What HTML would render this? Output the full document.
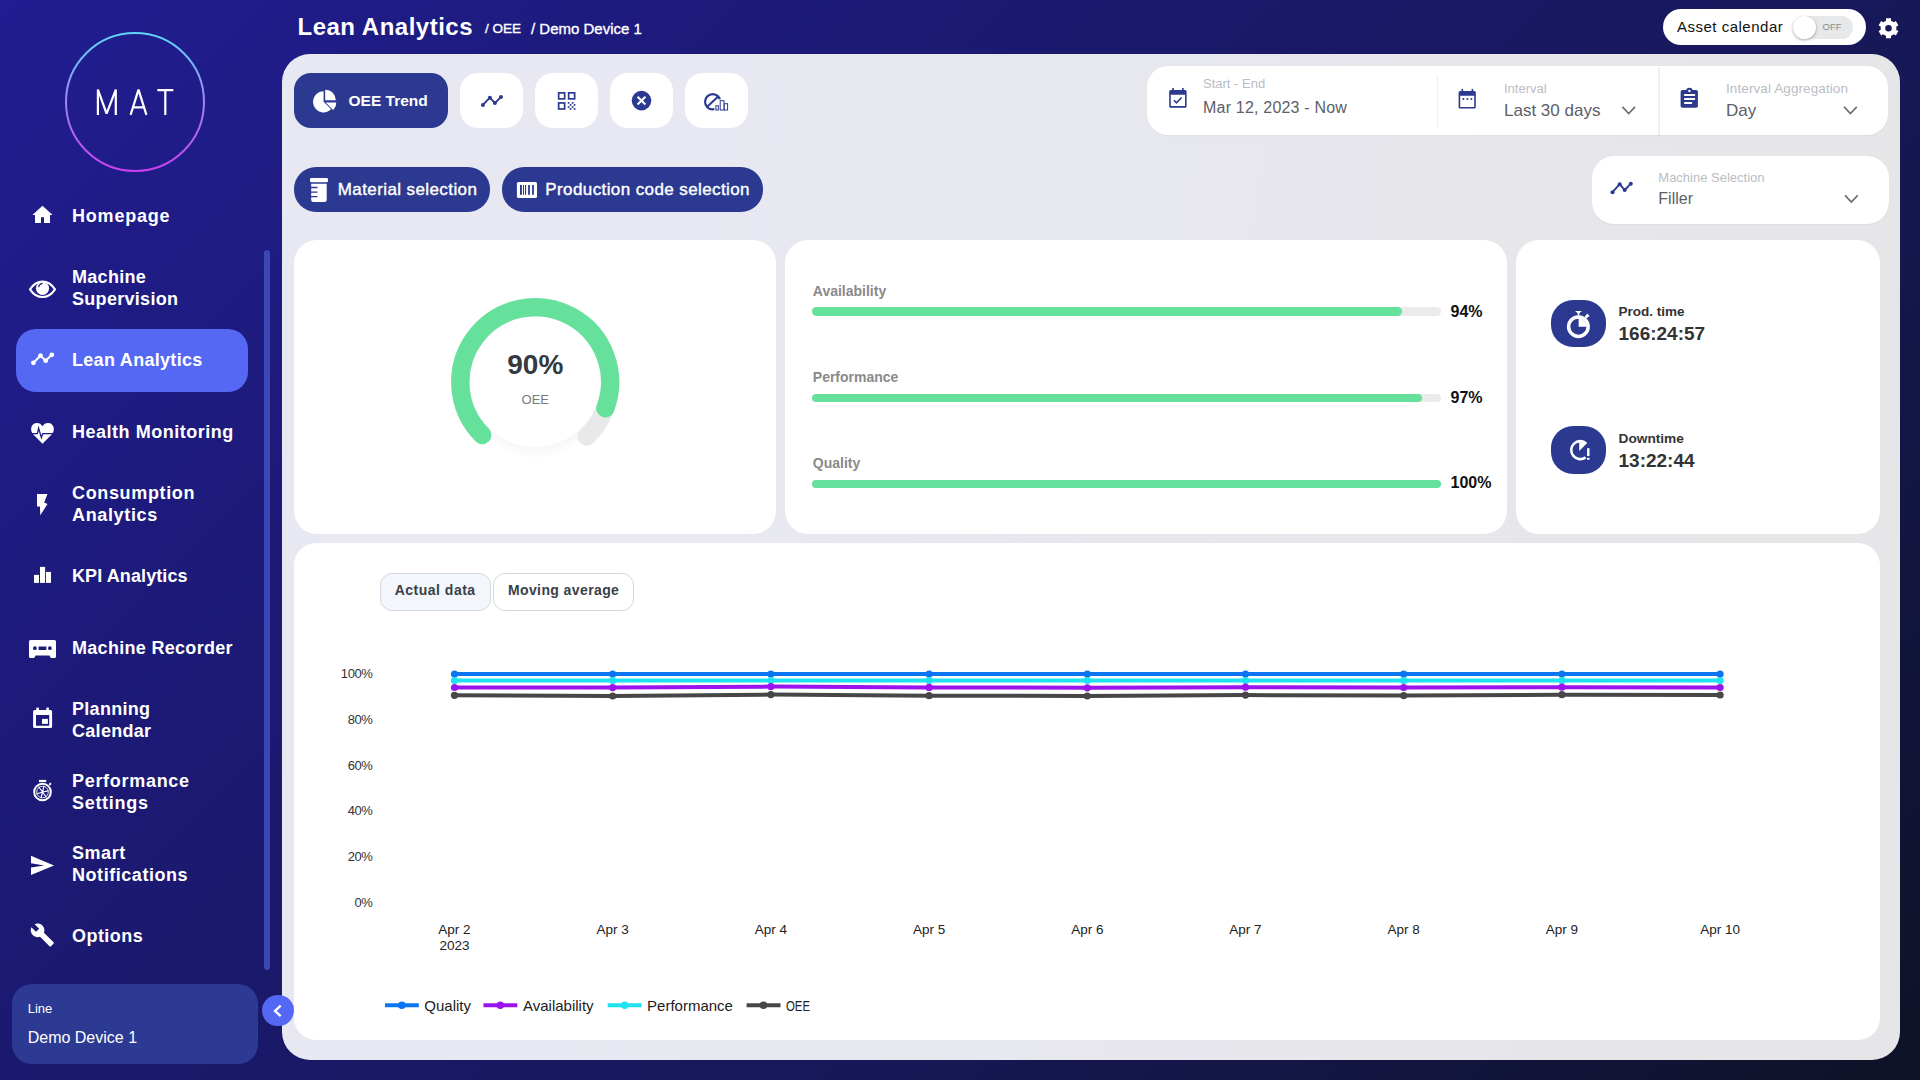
<!DOCTYPE html>
<html><head><meta charset="utf-8">
<style>
*{box-sizing:border-box;margin:0;padding:0}
html,body{width:1920px;height:1080px;overflow:hidden}
body{font-family:"Liberation Sans",sans-serif;position:relative;
background:linear-gradient(135deg,#211d92 0%,#1b196f 36%,#171858 64%,#0e1226 100%);}
.abs{position:absolute}
.t{position:absolute;white-space:nowrap;line-height:1}
svg{position:absolute;left:0;top:0;overflow:visible}
</style></head><body>

<svg width="1920" height="1080" style="z-index:1"><defs><linearGradient id="lg" x1="0" y1="0" x2="0" y2="1"><stop offset="0" stop-color="#5ed6f8"/><stop offset="0.5" stop-color="#9d85f4"/><stop offset="1" stop-color="#cc3ff0"/></linearGradient></defs><circle cx="135" cy="102" r="69" fill="none" stroke="url(#lg)" stroke-width="2"/><g fill="none" stroke="#fff" stroke-width="2.2" stroke-linejoin="bevel"><path d="M97.9 114.9 V89.6 L106.6 113.6 L115.8 89.6 V114.9"/><path d="M130.6 114.9 L138.5 89.6 L146.4 114.9 M133.4 107.3 H143.6"/><path d="M157.3 90.1 H173.3 M165.3 90.1 V115"/></g></svg>
<div class="abs" style="left:16px;top:329px;width:232px;height:63px;background:#5468f3;border-radius:20px;"></div>
<div class="abs" style="left:264px;top:250px;width:6px;height:720px;background:#3a47b4;border-radius:3px;"></div>
<div class="abs" style="left:72px;top:205.06px;color:#fff;font-weight:700;font-size:18px;letter-spacing:0.8px;line-height:22px;white-space:nowrap">Homepage</div>
<div class="abs" style="left:72px;top:265.76px;color:#fff;font-weight:700;font-size:18px;letter-spacing:0.3px;line-height:22px;white-space:nowrap">Machine<br>Supervision</div>
<div class="abs" style="left:72px;top:349.16px;color:#fff;font-weight:700;font-size:18px;letter-spacing:0.3px;line-height:22px;white-space:nowrap">Lean Analytics</div>
<div class="abs" style="left:72px;top:421.36px;color:#fff;font-weight:700;font-size:18px;letter-spacing:0.52px;line-height:22px;white-space:nowrap">Health Monitoring</div>
<div class="abs" style="left:72px;top:482.46px;color:#fff;font-weight:700;font-size:18px;letter-spacing:0.65px;line-height:22px;white-space:nowrap">Consumption<br>Analytics</div>
<div class="abs" style="left:72px;top:564.96px;color:#fff;font-weight:700;font-size:18px;letter-spacing:0.1px;line-height:22px;white-space:nowrap">KPI Analytics</div>
<div class="abs" style="left:72px;top:636.66px;color:#fff;font-weight:700;font-size:18px;letter-spacing:0.3px;line-height:22px;white-space:nowrap">Machine Recorder</div>
<div class="abs" style="left:72px;top:698.26px;color:#fff;font-weight:700;font-size:18px;letter-spacing:0.3px;line-height:22px;white-space:nowrap">Planning<br>Calendar</div>
<div class="abs" style="left:72px;top:769.96px;color:#fff;font-weight:700;font-size:18px;letter-spacing:0.7px;line-height:22px;white-space:nowrap">Performance<br>Settings</div>
<div class="abs" style="left:72px;top:841.76px;color:#fff;font-weight:700;font-size:18px;letter-spacing:0.55px;line-height:22px;white-space:nowrap">Smart<br>Notifications</div>
<div class="abs" style="left:72px;top:925.06px;color:#fff;font-weight:700;font-size:18px;letter-spacing:0.45px;line-height:22px;white-space:nowrap">Options</div>
<svg width="1920" height="1080" style="z-index:2"><g fill="#fff"><path d="M42.5 205.8 L32.4 215 H35 V223 H41 V217.3 H44 V223 H50 V215 H52.6 Z"/><path d="M30 289.3 C33.5 284 37.5 281.6 42.5 281.6 C47.5 281.6 51.5 284 55 289.3 C51.5 294.6 47.5 297 42.5 297 C37.5 297 33.5 294.6 30 289.3 Z" fill="none" stroke="#fff" stroke-width="2.1" stroke-linejoin="round"/><circle cx="42.5" cy="288.3" r="6.6"/><path d="M38.6 287.2 Q39 284 42.6 283.3" fill="none" stroke="#1f1b8a" stroke-width="1.2"/><polyline points="33.4,362.8 40.5,355.7 45.7,360.7 51.8,354.8" fill="none" stroke="#fff" stroke-width="2"/><circle cx="33.4" cy="362.8" r="2.4"/><circle cx="40.5" cy="355.7" r="2.4"/><circle cx="45.7" cy="360.7" r="2.4"/><circle cx="51.8" cy="354.8" r="2.4"/><path d="M42.5 443.8 L33.6 434.8 C29.3 430.5 30.8 422.9 37 422.9 C39.8 422.9 41.6 424.7 42.5 426.3 C43.4 424.7 45.2 422.9 48 422.9 C54.2 422.9 55.7 430.5 51.4 434.8 Z"/><polyline points="30.5,433.6 37.4,433.6 38.6,428.2 41.4,437.6 42.7,433.6 54.5,433.6" fill="none" stroke="#1f1b88" stroke-width="1.3"/><path d="M37 494 H47.5 L44.2 502.4 L47.5 504 L40.3 515.2 L39.9 506.4 H37 Z"/><rect x="34" y="574.9" width="5" height="8"/><rect x="40" y="566.9" width="5.1" height="16"/><rect x="46" y="571.9" width="5" height="11"/><path fill-rule="evenodd" d="M30.5 639.9 H54.5 Q56 639.9 56 641.4 V656.5 Q56 658 54.5 658 H51.2 Q50 658 49.6 655.6 H35.4 Q35 658 33.8 658 H30.5 Q29 658 29 656.5 V641.4 Q29 639.9 30.5 639.9 Z M34.9 646.3 A1.9 1.9 0 1 0 34.9 650.1 A1.9 1.9 0 1 0 34.9 646.3 Z M38.6 646.5 H46.4 V649.9 H38.6 Z M49.9 646.3 A1.9 1.9 0 1 0 49.9 650.1 A1.9 1.9 0 1 0 49.9 646.3 Z"/><path fill-rule="evenodd" d="M34.6 709.9 H50.6 Q52.1 709.9 52.1 711.4 V726.5 Q52.1 728 50.6 728 H34.6 Q33.1 728 33.1 726.5 V711.4 Q33.1 709.9 34.6 709.9 Z M36 715 V725.8 H49.2 V715 Z"/><rect x="36.3" y="707.6" width="2.6" height="3"/><rect x="46.3" y="707.6" width="2.6" height="3"/><rect x="42" y="718.9" width="5.9" height="5"/><rect x="39" y="779.9" width="7.2" height="2.2"/><circle cx="42.5" cy="792" r="8.3" fill="none" stroke="#fff" stroke-width="2"/><path d="M48.6 784.2 L50.3 782.6 L51.6 783.9 L50 785.5 Z"/><g stroke="#fff" stroke-width="1.2" fill="none"><path d="M42.5 792 L36.5 794 M42.5 792 L38.5 786.5 M42.5 792 L44 786 M42.5 792 L48.3 790.8 M42.5 792 L46.5 797.5 M42.5 792 L41 798"/></g><circle cx="42.5" cy="792" r="5.8" fill="none" stroke="#fff" stroke-width="0.9"/><path d="M31 855.7 L54 865.4 L31 875.1 V867.6 L44.2 865.4 L31 863.2 Z"/><path transform="translate(29.7 922.4) scale(1.05)" d="M22.7 19l-9.1-9.1c.9-2.3.4-5-1.5-6.9-2-2-5-2.4-7.4-1.3L9 6 6 9 1.6 4.7C.4 7.1.9 10.1 2.9 12.1c1.9 1.9 4.6 2.4 6.9 1.5l9.1 9.1c.4.4 1 .4 1.4 0l2.3-2.3c.5-.4.5-1.1.1-1.4z"/></g></svg>
<div class="abs" style="left:12px;top:984px;width:246px;height:80px;background:#2c3a93;border-radius:20px;"></div>
<div class="t" style="left:27.70px;top:1002.10px;font-size:13px;color:#fff;">Line</div>
<div class="t" style="left:27.70px;top:1029.96px;font-size:16px;color:#fff;">Demo Device 1</div>
<div class="t" style="left:297.50px;top:14.58px;font-size:24px;color:#fff;font-weight:700;letter-spacing:0.5px;">Lean Analytics</div>
<div class="t" style="left:485.00px;top:21.87px;font-size:13.5px;color:#fff;-webkit-text-stroke:0.35px #fff;">/ OEE</div>
<div class="t" style="left:531.00px;top:20.60px;font-size:15px;color:#fff;-webkit-text-stroke:0.35px #fff;">/ Demo Device 1</div>
<div class="abs" style="left:1663px;top:9px;width:203px;height:36px;background:#fff;border-radius:18px;"></div>
<div class="t" style="left:1677.00px;top:19.30px;font-size:15px;color:#111;letter-spacing:0.5px;">Asset calendar</div>
<div class="abs" style="left:1793px;top:15.5px;width:60px;height:23px;background:#e6e8e9;border-radius:12px;"></div>
<div class="abs" style="left:1793px;top:15.5px;width:23px;height:23px;background:#fff;border-radius:12px;box-shadow:0 1px 3px rgba(0,0,0,.35)"></div>
<div class="t" style="left:1822.50px;top:21.96px;font-size:9.5px;color:#8a8d90;">OFF</div>
<svg width="1920" height="1080" style="z-index:2"><path fill-rule="evenodd" fill="#fff" d="M1890.96 20.69 L1891.05 18.32 L1885.95 18.32 L1886.04 20.69 L1883.14 22.36 L1881.13 21.10 L1878.58 25.52 L1880.68 26.62 L1880.68 29.98 L1878.58 31.08 L1881.13 35.50 L1883.14 34.24 L1886.04 35.91 L1885.95 38.28 L1891.05 38.28 L1890.96 35.91 L1893.86 34.24 L1895.87 35.50 L1898.42 31.08 L1896.32 29.98 L1896.32 26.62 L1898.42 25.52 L1895.87 21.10 L1893.86 22.36 Z M1891.80 28.30 A3.3 3.3 0 1 0 1885.20 28.30 A3.3 3.3 0 1 0 1891.80 28.30 Z"/></svg>
<div class="abs" style="left:282px;top:54px;width:1618px;height:1006px;background:linear-gradient(100deg,#e8e8f2 25%,#e6e6e9 85%);border-radius:28px;"></div>
<div class="abs" style="left:262px;top:994.8px;width:31.5px;height:31.5px;border-radius:50%;background:#5568f5;z-index:3"></div>
<svg width="1920" height="1080" style="z-index:4"><polyline points="280.7,1005.6 275,1010.9 280.7,1016.2" fill="none" stroke="#fff" stroke-width="2.3"/></svg>
<div class="abs" style="left:294px;top:73px;width:154px;height:55px;background:#2b3990;border-radius:17px;"></div>
<div class="t" style="left:348.50px;top:93.18px;font-size:15.5px;color:#fff;font-weight:700;">OEE Trend</div>
<div class="abs" style="left:460px;top:73px;width:63px;height:55px;background:#fff;border-radius:18px;"></div>
<div class="abs" style="left:535px;top:73px;width:63px;height:55px;background:#fff;border-radius:18px;"></div>
<div class="abs" style="left:610px;top:73px;width:63px;height:55px;background:#fff;border-radius:18px;"></div>
<div class="abs" style="left:685px;top:73px;width:63px;height:55px;background:#fff;border-radius:18px;"></div>
<div class="abs" style="left:1147px;top:66px;width:741px;height:69px;background:#fff;border-radius:21px;box-shadow:0 1px 2px rgba(0,0,0,0.04)"></div>
<div class="abs" style="left:1436.5px;top:74.5px;width:1.5px;height:53px;background:#efeff2;border-radius:0px;"></div>
<div class="abs" style="left:1658.2px;top:67px;width:1.5px;height:68px;background:#efeff2;border-radius:0px;"></div>
<div class="t" style="left:1203.00px;top:77.00px;font-size:13px;color:#b9bdc5;">Start - End</div>
<div class="t" style="left:1203.00px;top:100.46px;font-size:16px;color:#5c6066;letter-spacing:0.2px;">Mar 12, 2023 - Now</div>
<div class="t" style="left:1504.00px;top:82.40px;font-size:13px;color:#b9bdc5;">Interval</div>
<div class="t" style="left:1504.00px;top:101.81px;font-size:17px;color:#5c6066;">Last 30 days</div>
<div class="t" style="left:1726.00px;top:81.97px;font-size:13.5px;color:#b9bdc5;letter-spacing:0.1px;">Interval Aggregation</div>
<div class="t" style="left:1726.00px;top:101.81px;font-size:17px;color:#5c6066;">Day</div>
<div class="abs" style="left:294px;top:167px;width:196px;height:45px;background:#2b3990;border-radius:22px;"></div>
<div class="t" style="left:337.80px;top:180.91px;font-size:17px;color:#fff;letter-spacing:0.4px;-webkit-text-stroke:0.4px #fff;">Material selection</div>
<div class="abs" style="left:502px;top:167px;width:261px;height:45px;background:#2b3990;border-radius:22px;"></div>
<div class="t" style="left:545.30px;top:180.91px;font-size:17px;color:#fff;letter-spacing:0.4px;-webkit-text-stroke:0.4px #fff;">Production code selection</div>
<div class="abs" style="left:1592px;top:156px;width:297px;height:68px;background:#fff;border-radius:22px;box-shadow:0 1px 2px rgba(0,0,0,0.04)"></div>
<div class="t" style="left:1658.30px;top:171.00px;font-size:13px;color:#b9bdc5;">Machine Selection</div>
<div class="t" style="left:1658.30px;top:190.86px;font-size:16px;color:#5c6066;">Filler</div>
<div class="abs" style="left:294px;top:240px;width:482px;height:294px;background:#fff;border-radius:23px;"></div>
<div class="abs" style="left:785px;top:240px;width:722px;height:294px;background:#fff;border-radius:23px;"></div>
<div class="abs" style="left:1516px;top:240px;width:364px;height:294px;background:#fff;border-radius:23px;"></div>
<div class="abs" style="left:294px;top:543px;width:1586px;height:497px;background:#fff;border-radius:22px;"></div>
<svg width="1920" height="1080" style="z-index:2"><path fill="#fff" d="M323.6 91.2 A10.6 10.6 0 1 0 331.10 109.30 L323.6 101.8 Z"/><path fill="#fff" d="M325.2 89.7 A10.6 10.6 0 0 1 335.8 100.3 L325.2 100.3 Z"/><path fill="#fff" d="M336.20000000000005 102.5 A10.6 10.6 0 0 1 333.10 110.00 L325.6 102.5 Z"/><g fill="#2b3990"><polyline points="482.9,104.9 489.9,97.7 494.9,103.1 501,96.9" fill="none" stroke="#2b3990" stroke-width="1.9"/><circle cx="482.9" cy="104.9" r="2"/><circle cx="489.9" cy="97.7" r="2"/><circle cx="494.9" cy="103.1" r="2"/><circle cx="501" cy="96.9" r="2"/></g><g fill="none" stroke="#2b3990" stroke-width="1.7"><rect x="558.65" y="92.85" width="6" height="6"/><rect x="568.65" y="92.85" width="6" height="6"/><rect x="558.65" y="102.95" width="6" height="6"/></g><g fill="#2b3990"><rect x="567.75" y="102.05000000000001" width="1.7" height="1.7"/><rect x="571.75" y="102.05000000000001" width="1.7" height="1.7"/><rect x="569.75" y="104.10000000000001" width="1.7" height="1.7"/><rect x="573.75" y="104.10000000000001" width="1.7" height="1.7"/><rect x="567.75" y="106.15" width="1.7" height="1.7"/><rect x="571.75" y="106.15" width="1.7" height="1.7"/><rect x="569.75" y="108.15" width="1.7" height="1.7"/><rect x="573.75" y="108.15" width="1.7" height="1.7"/></g><circle cx="641.5" cy="100.6" r="9.8" fill="#2b3990"/><path d="M637.6 96.7 L645.4 104.5 M645.4 96.7 L637.6 104.5" stroke="#fff" stroke-width="2"/><circle cx="712.7" cy="101.8" r="7.65" fill="none" stroke="#2b3990" stroke-width="2.2"/><path d="M707.4 106.5 L718.2 96.6" stroke="#2b3990" stroke-width="2.1"/><path d="M714.4 111 V104.3 H718.9 V99.3 H724.8 V102.3 H728.8 V111 Z" fill="#fff"/><g fill="#fff" stroke="#2b3990" stroke-width="1"><rect x="715.9" y="105.7" width="2.4" height="4.3"/><rect x="720.2" y="100.7" width="3.8" height="9.3"/><rect x="724.3" y="103.7" width="3.3" height="6.3"/></g><g fill="#fff"><rect x="310" y="178" width="18" height="4.3" rx="1.2"/><path d="M311.2 183.8 H326.7 V200 Q326.7 202 324.7 202 H313.2 Q311.2 202 311.2 200 Z"/></g><g stroke="#2b3990" stroke-width="1.3"><path d="M310.8 187.5 H317.5 M310.8 192.2 H317.5 M310.8 196.7 H317.5"/></g><rect x="516.9" y="182" width="20.1" height="16" rx="1.6" fill="#fff"/><g fill="#2b3990"><rect x="520" y="185" width="1.9" height="9.8"/><rect x="523" y="185" width="1" height="9.8"/><rect x="525" y="185" width="1.1" height="9.8"/><rect x="528.1" y="185" width="1.8" height="9.8"/><rect x="532.1" y="185" width="1.8" height="9.8"/></g><g fill="#2b3990"><path fill-rule="evenodd" d="M1170.7 90.1 H1185.1 Q1186.6 90.1 1186.6 91.6 V106.2 Q1186.6 107.7 1185.1 107.7 H1170.7 Q1169.2 107.7 1169.2 106.2 V91.6 Q1169.2 90.1 1170.7 90.1 Z M1170.8 94.8 V106.1 H1185 V94.8 Z"/><rect x="1172.2" y="88" width="1.6" height="3"/><rect x="1182.1" y="88" width="1.6" height="3"/></g><polyline points="1174,100.3 1176.4,102.8 1181.6,97.5" fill="none" stroke="#2b3990" stroke-width="1.6"/><g fill="#2b3990"><path fill-rule="evenodd" d="M1460.1 91.1 H1474.3 Q1475.8 91.1 1475.8 92.6 V107 Q1475.8 108.5 1474.3 108.5 H1460.1 Q1458.6 108.5 1458.6 107 V92.6 Q1458.6 91.1 1460.1 91.1 Z M1460.2 95.8 V106.9 H1474.2 V95.8 Z"/><rect x="1461.5" y="88.9" width="1.6" height="3"/><rect x="1471.6" y="88.9" width="1.6" height="3"/><circle cx="1463.4" cy="98.9" r="1"/><circle cx="1467.4" cy="98.9" r="1"/><circle cx="1471.4" cy="98.9" r="1"/></g><g><rect x="1680.6" y="90" width="17.3" height="17.7" rx="1.8" fill="#2b3990"/><circle cx="1689.4" cy="90.9" r="3.2" fill="#2b3990"/><circle cx="1689.4" cy="90.9" r="1.2" fill="#fff"/><g stroke="#fff" stroke-width="2" stroke-linecap="round"><path d="M1684.9 94.9 H1694.3 M1684.9 99 H1694.3 M1684.9 102.9 H1691.3"/></g></g><polyline points="1622.4,106.9 1628.7,113.5 1635.1000000000001,106.80000000000001" fill="none" stroke="#6b7078" stroke-width="1.7"/><polyline points="1844.1,106.9 1850.3999999999999,113.5 1856.8,106.80000000000001" fill="none" stroke="#6b7078" stroke-width="1.7"/><polyline points="1845,195.4 1851.3,202.0 1857.7,195.3" fill="none" stroke="#6b7078" stroke-width="1.7"/><g fill="#2b3990"><polyline points="1612.5,192.2 1619.7,184.2 1624.7,190 1630.8,183.7" fill="none" stroke="#2b3990" stroke-width="1.9"/><circle cx="1612.5" cy="192.2" r="2"/><circle cx="1619.7" cy="184.2" r="2"/><circle cx="1624.7" cy="190" r="2"/><circle cx="1630.8" cy="183.7" r="2"/></g></svg>
<div class="abs" style="left:470.2px;top:317.1px;width:130.0px;height:130.0px;border-radius:50%;background:#fff;box-shadow:0 6px 10px rgba(0,0,0,0.04)"></div>
<svg width="1920" height="1080" style="z-index:1"><path d="M482.24 435.06 A74.9 74.9 0 1 1 586.66 436.52" fill="none" stroke="#e7e9ea" stroke-width="18.3" stroke-linecap="round"/><path d="M482.24 435.06 A74.9 74.9 0 1 1 605.40 408.21" fill="none" stroke="#66e19b" stroke-width="18.3" stroke-linecap="round"/></svg>
<div class="t" style="left:335.30px;width:400px;text-align:center;top:350.90px;font-size:28px;color:#343a40;font-weight:700;">90%</div>
<div class="t" style="left:335.30px;width:400px;text-align:center;top:393.20px;font-size:13px;color:#7a7a7a;">OEE</div>
<div class="t" style="left:812.80px;top:283.65px;font-size:14px;color:#8a8a8a;font-weight:700;">Availability</div>
<div class="abs" style="left:812px;top:307.0px;width:629px;height:8.8px;background:#ebebee;border-radius:5px;"></div>
<div class="abs" style="left:812px;top:307.0px;width:590.4000000000001px;height:8.8px;background:#66e19b;border-radius:5px;"></div>
<div class="t" style="left:1450.50px;top:304.36px;font-size:16px;color:#111;font-weight:700;">94%</div>
<div class="t" style="left:812.80px;top:370.35px;font-size:14px;color:#8a8a8a;font-weight:700;">Performance</div>
<div class="abs" style="left:812px;top:393.7px;width:629px;height:8.8px;background:#ebebee;border-radius:5px;"></div>
<div class="abs" style="left:812px;top:393.7px;width:609.5999999999999px;height:8.8px;background:#66e19b;border-radius:5px;"></div>
<div class="t" style="left:1450.50px;top:389.86px;font-size:16px;color:#111;font-weight:700;">97%</div>
<div class="t" style="left:812.80px;top:456.15px;font-size:14px;color:#8a8a8a;font-weight:700;">Quality</div>
<div class="abs" style="left:812px;top:479.5px;width:629px;height:8.8px;background:#ebebee;border-radius:5px;"></div>
<div class="abs" style="left:812px;top:479.5px;width:629px;height:8.8px;background:#66e19b;border-radius:5px;"></div>
<div class="t" style="left:1450.50px;top:475.46px;font-size:16px;color:#111;font-weight:700;">100%</div>
<div class="abs" style="left:1551px;top:300px;width:55px;height:47px;background:#2b3990;border-radius:22px;"></div>
<div class="abs" style="left:1551px;top:426px;width:55px;height:47.5px;background:#2b3990;border-radius:22px;"></div>
<div class="t" style="left:1618.50px;top:305.07px;font-size:13.5px;color:#333;font-weight:700;">Prod. time</div>
<div class="t" style="left:1618.50px;top:324.12px;font-size:19px;color:#333;font-weight:700;">166:24:57</div>
<div class="t" style="left:1618.50px;top:431.70px;font-size:13.7px;color:#333;font-weight:700;">Downtime</div>
<div class="t" style="left:1618.50px;top:450.92px;font-size:19px;color:#333;font-weight:700;">13:22:44</div>
<svg width="1920" height="1080" style="z-index:2"><g fill="#fff"><circle cx="1578.4" cy="326.7" r="9.75" fill="none" stroke="#fff" stroke-width="3.5"/><path d="M1578.6 318.6 A8.1 8.1 0 0 1 1586.7 326.8 L1578.6 326.8 Z"/><path d="M1575 311 H1582 L1579.3 313.3 V315.5 H1577.7 V313.3 Z"/><path d="M1584.6 317 L1587.2 313.6 L1589.6 315.9 L1586.3 318.6 Z"/></g><g fill="#fff"><path d="M1586.4 443.6 A9 9 0 1 0 1585.6 457.4" fill="none" stroke="#fff" stroke-width="2.6"/><path d="M1579.2 441.9 L1586.9 443.3 L1579.2 450.9 Z"/><rect x="1587.1" y="448.2" width="2.4" height="7.8"/><rect x="1587.1" y="457.8" width="2.4" height="2"/></g></svg>
<div class="abs" style="left:380.3px;top:573.2px;width:110.3px;height:37.5px;background:#f3f7fc;border-radius:12px;border:1px solid #d3d8df"></div>
<div class="abs" style="left:493.1px;top:573.2px;width:140.7px;height:37.5px;background:#fff;border-radius:12px;border:1px solid #d3d8df"></div>
<div class="t" style="left:394.70px;top:583.35px;font-size:14px;color:#3a3f47;font-weight:700;letter-spacing:0.5px;">Actual data</div>
<div class="t" style="left:507.90px;top:583.35px;font-size:14px;color:#3a3f47;font-weight:700;letter-spacing:0.4px;">Moving average</div>
<div class="t" style="right:1547.50px;top:667.20px;font-size:13px;color:#333;text-align:right;letter-spacing:-0.4px;">100%</div>
<div class="t" style="right:1547.50px;top:712.90px;font-size:13px;color:#333;text-align:right;letter-spacing:-0.4px;">80%</div>
<div class="t" style="right:1547.50px;top:758.60px;font-size:13px;color:#333;text-align:right;letter-spacing:-0.4px;">60%</div>
<div class="t" style="right:1547.50px;top:804.30px;font-size:13px;color:#333;text-align:right;letter-spacing:-0.4px;">40%</div>
<div class="t" style="right:1547.50px;top:850.00px;font-size:13px;color:#333;text-align:right;letter-spacing:-0.4px;">20%</div>
<div class="t" style="right:1547.50px;top:895.70px;font-size:13px;color:#333;text-align:right;letter-spacing:-0.4px;">0%</div>
<div class="t" style="left:254.50px;width:400px;text-align:center;top:922.57px;font-size:13.5px;color:#222;">Apr 2</div>
<div class="t" style="left:412.70px;width:400px;text-align:center;top:922.57px;font-size:13.5px;color:#222;">Apr 3</div>
<div class="t" style="left:570.90px;width:400px;text-align:center;top:922.57px;font-size:13.5px;color:#222;">Apr 4</div>
<div class="t" style="left:729.10px;width:400px;text-align:center;top:922.57px;font-size:13.5px;color:#222;">Apr 5</div>
<div class="t" style="left:887.30px;width:400px;text-align:center;top:922.57px;font-size:13.5px;color:#222;">Apr 6</div>
<div class="t" style="left:1045.50px;width:400px;text-align:center;top:922.57px;font-size:13.5px;color:#222;">Apr 7</div>
<div class="t" style="left:1203.70px;width:400px;text-align:center;top:922.57px;font-size:13.5px;color:#222;">Apr 8</div>
<div class="t" style="left:1361.90px;width:400px;text-align:center;top:922.57px;font-size:13.5px;color:#222;">Apr 9</div>
<div class="t" style="left:1520.10px;width:400px;text-align:center;top:922.57px;font-size:13.5px;color:#222;">Apr 10</div>
<div class="t" style="left:254.50px;width:400px;text-align:center;top:939.17px;font-size:13.5px;color:#222;">2023</div>
<svg width="1920" height="1080" style="z-index:1"><polyline points="454.5,674.1 612.7,674.1 770.9,674.1 929.1,674.1 1087.3,674.1 1245.5,674.1 1403.7,674.1 1561.9,674.1 1720.1,674.1" fill="none" stroke="#0b75f1" stroke-width="4" stroke-linejoin="round"/><circle cx="454.5" cy="674.1" r="3.6" fill="#0b75f1"/><circle cx="612.7" cy="674.1" r="3.6" fill="#0b75f1"/><circle cx="770.9" cy="674.1" r="3.6" fill="#0b75f1"/><circle cx="929.1" cy="674.1" r="3.6" fill="#0b75f1"/><circle cx="1087.3" cy="674.1" r="3.6" fill="#0b75f1"/><circle cx="1245.5" cy="674.1" r="3.6" fill="#0b75f1"/><circle cx="1403.7" cy="674.1" r="3.6" fill="#0b75f1"/><circle cx="1561.9" cy="674.1" r="3.6" fill="#0b75f1"/><circle cx="1720.1" cy="674.1" r="3.6" fill="#0b75f1"/><polyline points="454.5,680.5 612.7,680.5 770.9,680.5 929.1,680.5 1087.3,680.5 1245.5,680.5 1403.7,680.5 1561.9,680.5 1720.1,680.5" fill="none" stroke="#1ee2ef" stroke-width="4" stroke-linejoin="round"/><circle cx="454.5" cy="680.5" r="3.6" fill="#1ee2ef"/><circle cx="612.7" cy="680.5" r="3.6" fill="#1ee2ef"/><circle cx="770.9" cy="680.5" r="3.6" fill="#1ee2ef"/><circle cx="929.1" cy="680.5" r="3.6" fill="#1ee2ef"/><circle cx="1087.3" cy="680.5" r="3.6" fill="#1ee2ef"/><circle cx="1245.5" cy="680.5" r="3.6" fill="#1ee2ef"/><circle cx="1403.7" cy="680.5" r="3.6" fill="#1ee2ef"/><circle cx="1561.9" cy="680.5" r="3.6" fill="#1ee2ef"/><circle cx="1720.1" cy="680.5" r="3.6" fill="#1ee2ef"/><polyline points="454.5,687.5 612.7,687.6 770.9,686.6 929.1,687.4 1087.3,687.8 1245.5,687.2 1403.7,687.5 1561.9,687.2 1720.1,687.5" fill="none" stroke="#9b14ee" stroke-width="4" stroke-linejoin="round"/><circle cx="454.5" cy="687.5" r="3.6" fill="#9b14ee"/><circle cx="612.7" cy="687.6" r="3.6" fill="#9b14ee"/><circle cx="770.9" cy="686.6" r="3.6" fill="#9b14ee"/><circle cx="929.1" cy="687.4" r="3.6" fill="#9b14ee"/><circle cx="1087.3" cy="687.8" r="3.6" fill="#9b14ee"/><circle cx="1245.5" cy="687.2" r="3.6" fill="#9b14ee"/><circle cx="1403.7" cy="687.5" r="3.6" fill="#9b14ee"/><circle cx="1561.9" cy="687.2" r="3.6" fill="#9b14ee"/><circle cx="1720.1" cy="687.5" r="3.6" fill="#9b14ee"/><polyline points="454.5,695.3 612.7,696 770.9,694.6 929.1,695.7 1087.3,696 1245.5,695.1 1403.7,695.6 1561.9,694.7 1720.1,695" fill="none" stroke="#474747" stroke-width="4" stroke-linejoin="round"/><circle cx="454.5" cy="695.3" r="3.6" fill="#474747"/><circle cx="612.7" cy="696" r="3.6" fill="#474747"/><circle cx="770.9" cy="694.6" r="3.6" fill="#474747"/><circle cx="929.1" cy="695.7" r="3.6" fill="#474747"/><circle cx="1087.3" cy="696" r="3.6" fill="#474747"/><circle cx="1245.5" cy="695.1" r="3.6" fill="#474747"/><circle cx="1403.7" cy="695.6" r="3.6" fill="#474747"/><circle cx="1561.9" cy="694.7" r="3.6" fill="#474747"/><circle cx="1720.1" cy="695" r="3.6" fill="#474747"/><line x1="385" y1="1005.2" x2="418.8" y2="1005.2" stroke="#0b75f1" stroke-width="4"/><circle cx="401.9" cy="1005.2" r="3.8" fill="#0b75f1"/><line x1="483.4" y1="1005.2" x2="517.3" y2="1005.2" stroke="#9b14ee" stroke-width="4"/><circle cx="500.3" cy="1005.2" r="3.8" fill="#9b14ee"/><line x1="607.7" y1="1005.2" x2="641.6" y2="1005.2" stroke="#1ee2ef" stroke-width="4"/><circle cx="624.7" cy="1005.2" r="3.8" fill="#1ee2ef"/><line x1="746.6" y1="1005.2" x2="780.5" y2="1005.2" stroke="#474747" stroke-width="4"/><circle cx="763.5" cy="1005.2" r="3.8" fill="#474747"/></svg>
<div class="t" style="left:424.30px;top:998.30px;font-size:15px;color:#222;">Quality</div>
<div class="t" style="left:523.00px;top:998.30px;font-size:15px;color:#222;">Availability</div>
<div class="t" style="left:647.10px;top:998.30px;font-size:15px;color:#222;">Performance</div>
<div class="t" style="left:786.30px;top:998.30px;font-size:15px;color:#222;transform:scaleX(0.76);transform-origin:0 0;">OEE</div>
</body></html>
